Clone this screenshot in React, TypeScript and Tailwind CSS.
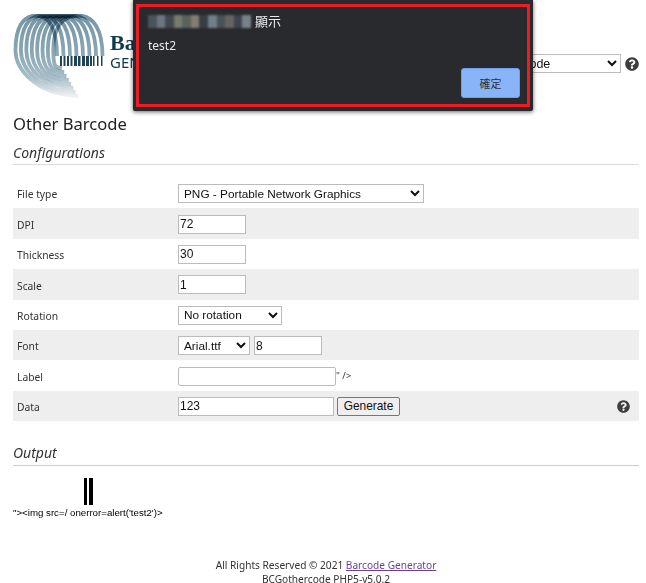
const sans = "font-['Noto_Sans','Open_Sans',sans-serif]";
const arial = "font-['Liberation_Sans',Arial,sans-serif]";

function Help({ className = "" }: { className?: string }) {
  return (
    <svg viewBox="0 0 512 512" className={`shrink-0 ${className}`}>
      <path
        fill="#3d3d3d"
        d="M504 256c0 137-111 248-248 248S8 393 8 256 119 8 256 8s248 111 248 248zM262.700 90c-54.500 0-89.300 23-116.500 63.800-3.500 5.300-2.400 12.400 2.700 16.300l34.700 26.300c5.200 3.900 12.600 3 16.700-2.100 17.900-22.700 30.100-35.800 57.300-35.800 20.400 0 45.700 13.100 45.700 32.900 0 15-12.400 22.700-32.500 34-23.500 13.200-54.600 29.600-54.600 70.600V302c0 6.600 5.400 12 12 12h56c6.600 0 12-5.400 12-12v-1.300c0-28.500 83.200-29.700 83.200-106.700 0-58-60.200-102-116.500-102zM256 338c-25.400 0-46 20.600-46 46s20.600 46 46 46 46-20.600 46-46-20.600-46-46-46z"
      />
    </svg>
  );
}

function Logo() {
  const arcs = [0, 1, 2, 3, 4, 5, 6, 7];
  const bars: [number, number][] = [
    [60, 2], [63.500, 2], [67, 2], [70.500, 2], [74, 3], [78, 2.500], [82, 3], [86, 3], [90, 2], [93, 1.500], [97, 1.500], [101, 1.500],
  ];
  return (
    <svg width="92" height="84" viewBox="13 14 92 84" className="shrink-0">
      <defs>
        <linearGradient id="fade" gradientUnits="userSpaceOnUse" x1="0" y1="14" x2="0" y2="96">
          <stop offset="0" stopColor="#7695a5" />
          <stop offset="0.5" stopColor="#8aa8b6" />
          <stop offset="0.78" stopColor="#a9bfc9" />
          <stop offset="1" stopColor="#edf1f3" />
        </linearGradient>
      </defs>
      {arcs.map((k) => {
        const xl = 15.500 + 5.400 * k;
        const xr = 57 + 6.500 * k;
        const cx = (xl + xr) / 2;
        const ex = 78 - 2.300 * k;
        const ey = 96 - 4 * k;
        return (
          <path
            key={k}
            d={`M${xr} 56C${xr} 30 ${cx + (xr - cx) * 0.65} 15.500 ${cx} 15.500C${xl + (cx - xl) * 0.35} 15.500 ${xl} 28 ${xl} 50C${xl} 70 ${xl + (ex - xl) * 0.35} ${ey - 1} ${ex} ${ey}`}
            fill="none"
            stroke="url(#fade)"
            strokeWidth="3.800"
            className="mix-blend-multiply"
          />
        );
      })}
      {bars.map(([x, w]) => (
        <rect key={x} x={x} y="56" width={w} height="10" fill="#1f4454" />
      ))}
    </svg>
  );
}

const inputCls = `h-[19px] border border-[#bbbbbb] bg-white px-[1px] text-[12px] text-[#111111] outline-none ${arial}`;
const selectCls = `h-[19px] border border-[#bbbbbb] bg-white pl-[1px] text-[11.800px] text-[#111111] outline-none ${arial}`;

function Row({
  label,
  grey,
  children,
}: {
  label: string;
  grey?: boolean;
  children: React.ReactNode;
}) {
  return (
    <div className={`flex h-[30.400px] items-center pt-[1px] ${grey ? "bg-[#eeeeee]" : ""}`}>
      <div className="w-[165px] pl-[4px] pt-[3px] text-[10.300px] text-[#333333]">{label}</div>
      {children}
    </div>
  );
}

const mosaic = ["#5a6570","#8a97a3","#4c5560","#9a9d88","#6f7a70","#a89f90","#3f464f","#8fa3b0","#59626c","#7b7f78","#46505c","#9aa7b0"];

export default function App() {
  return (
    <div className={`relative h-[583px] w-[646px] overflow-hidden bg-white ${sans}`}>
      <header className="flex h-[112px] items-start pl-[13px] pt-[14px]">
        <Logo />
        <div className="ml-[5px] mt-[18px] whitespace-nowrap leading-none text-[#0f3a4c]">
          <div className="font-['Liberation_Serif',serif] text-[22px] font-bold leading-[22px]">Ba</div>
          <div className="text-[15px] leading-[16px]">GEN</div>
        </div>
        <div className="ml-auto mr-[7px] mt-[40px] flex items-center gap-[4px]">
          <select
            defaultValue="a"
            className={`h-[19px] w-[158px] border border-[#bbbbbb] bg-white pl-[1px] text-[12.500px] text-[#111111] outline-none ${arial}`}
          >
            <option value="a">Other Barcode</option>
          </select>
          <Help className="h-[14px] w-[14px]" />
        </div>
      </header>

      <main className="pl-[13px] pr-[7px]">
        <h1 className="text-[16.600px] leading-[24px] text-[#222222]">Other Barcode</h1>
        <h2 className="mt-[6px] border-b-[1.500px] border-[#dddddd] text-[14px] italic leading-[22px] text-[#333333]">
          Configurations
        </h2>
        <div className="mt-[13px]">
          <Row label="File type">
            <select defaultValue="png" className={`${selectCls} w-[246px]`}>
              <option value="png">PNG - Portable Network Graphics</option>
            </select>
          </Row>
          <Row label="DPI" grey>
            <input readOnly value="72" className={`${inputCls} w-[68px]`} />
          </Row>
          <Row label="Thickness">
            <input readOnly value="30" className={`${inputCls} w-[68px]`} />
          </Row>
          <Row label="Scale" grey>
            <input readOnly value="1" className={`${inputCls} w-[68px]`} />
          </Row>
          <Row label="Rotation">
            <select defaultValue="0" className={`${selectCls} w-[104px]`}>
              <option value="0">No rotation</option>
            </select>
          </Row>
          <Row label="Font" grey>
            <select defaultValue="a" className={`${selectCls} w-[72px]`}>
              <option value="a">Arial.ttf</option>
            </select>
            <input readOnly value="8" className={`${inputCls} ml-[4px] w-[68px]`} />
          </Row>
          <Row label="Label">
            <input readOnly value="" className={`${inputCls} w-[158px] rounded-[2px] border-[#888888]`} />
            <span className="text-[9.500px] text-[#333333]">" /&gt;</span>
          </Row>
          <Row label="Data" grey>
            <input readOnly value="123" className={`${inputCls} w-[156px]`} />
            <button className={`ml-[3px] h-[19px] w-[63px] rounded-[2px] border border-[#777777] bg-[#efefef] text-[11.900px] text-[#111111] ${arial}`}>
              Generate
            </button>
            <Help className="ml-auto mr-[9px] h-[13px] w-[13px]" />
          </Row>
        </div>

        <h2 className="mt-[21px] border-b border-[#cccccc] pb-[1px] text-[14px] italic leading-[22px] text-[#333333]">
          Output
        </h2>
        <div className="mt-[12px] flex h-[27px] gap-[2px] pl-[71px]">
          <div className="h-full w-[2.500px] bg-black" />
          <div className="h-full w-[4px] bg-black" />
        </div>
        <p className={`pt-[1px] text-[9.700px] leading-[13px] text-black ${arial}`}>
          "&gt;&lt;img src=/ onerror=alert('test2')&gt;
        </p>
      </main>

      <footer className="mt-[39px] pl-[6px] text-center text-[10.150px] leading-[14px] text-[#333333]">
        <p>
          All Rights Reserved © 2021 <a className="text-[#6b3fa0] underline">Barcode Generator</a>
        </p>
        <p>BCGothercode PHP5-v5.0.2</p>
      </footer>

      <div className="absolute left-[133px] top-0 flex h-[111px] w-[400px] flex-col rounded-b-[2px] bg-[#292a2d] px-[3px] pb-[4px] pt-[4px] shadow-[0_1px_4px_rgba(0,0,0,0.6)]">
        <div className="relative h-full border-[3px] border-[#ed1c24] px-[9px] pt-[5px]">
          <div className="flex h-[18px] items-center gap-[2px] text-[13px] text-[#e8eaed]">
            <div className="flex h-[13px] w-[103px] opacity-70 blur-[1px]">
              {mosaic.map((c, i) => (
                <div key={i} className="h-full flex-1" style={{ backgroundColor: c }} />
              ))}
            </div>
            <span className="ml-[2px] font-['Noto_Sans_CJK_TC',sans-serif]">顯示</span>
          </div>
          <div className="mt-[8px] text-[12px] leading-[16px] text-[#e8eaed]">test2</div>
          <button className="absolute bottom-[6px] right-[7px] flex h-[30px] w-[59px] items-center justify-center rounded-[3px] border border-[#6f9ef0] bg-[#8ab4f8] font-['Noto_Sans_CJK_TC',sans-serif] text-[11px] text-[#2a3340]">
            確定
          </button>
        </div>
      </div>
    </div>
  );
}
